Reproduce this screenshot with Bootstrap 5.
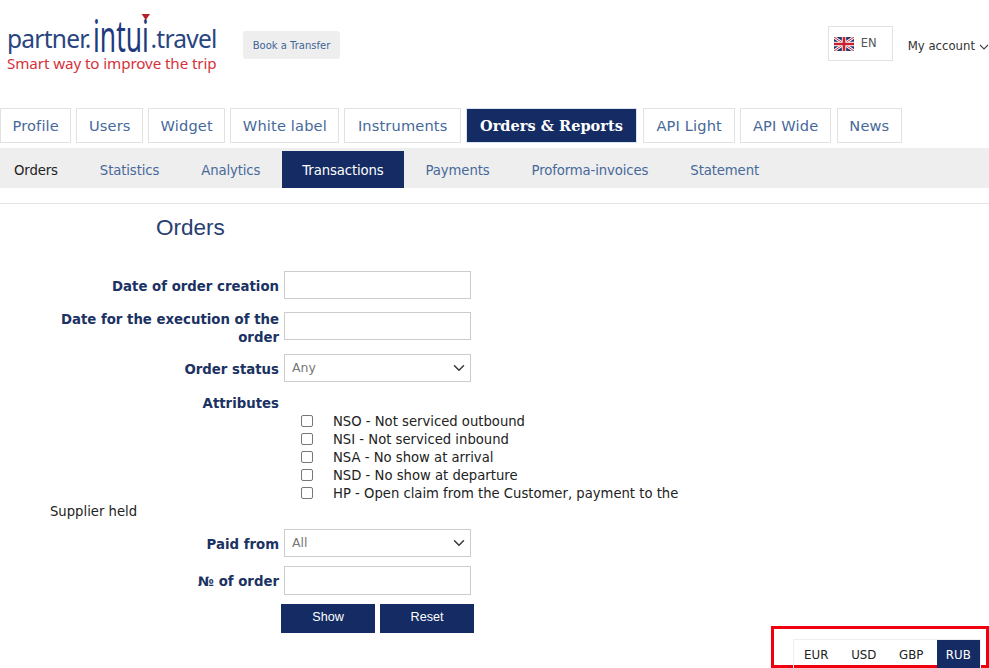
<!DOCTYPE html>
<html lang="en">
<head>
    <meta charset="UTF-8">
    <meta name="viewport" content="width=device-width, initial-scale=1.0">
    <title>Orders</title>
    <link href="https://cdn.jsdelivr.net/npm/bootstrap@5.3.0/dist/css/bootstrap.min.css" rel="stylesheet">
    <style>
        html, body {
            height: 668px;
            overflow: hidden;
        }
        body {
            font-family: "DejaVu Sans", Verdana, sans-serif;
            font-size: 13px;
            color: #222;
            background: #fff;
        }
        .top-head {
            height: 108px;
            padding: 13px 0 0 7px;
        }
        .logo-box {
            width: 210px;
            height: 62px;
            font-family: "Noto Sans", sans-serif;
            line-height: 1;
        }
        .logo-line {
            display: flex;
            align-items: flex-end;
            height: 41px;
            color: #27457f;
            font-size: 24.5px;
            line-height: 30px;
            letter-spacing: -.75px;
            white-space: nowrap;
        }
        .logo-big {
            display: inline-block;
            position: relative;
            width: 57px;
            margin: 0 1px 0 2px;
            font-size: 44px;
            line-height: 38px;
            color: #1d3a7e;
            letter-spacing: 0;
            transform-origin: left bottom;
            transform: scaleX(.6);
        }
        .logo-tick {
            position: absolute;
            left: 81px;
            top: -2px;
            width: 0;
            height: 0;
            border-left: 7px solid transparent;
            border-right: 7px solid transparent;
            border-top: 6px solid #b3202c;
        }
        .logo-sub {
            color: #d5323c;
            font-size: 15.2px;
            white-space: nowrap;
            letter-spacing: -.1px;
            margin-top: 2px;
        }
        .book-btn {
            margin: 18px 0 0 26px;
            height: 28px;
            width: 97px;
            padding: 0;
            background: #eee;
            border: 0;
            border-radius: 3px;
            font-size: 10px;
            line-height: 29px;
            color: #3d6596;
        }
        .lang-box {
            width: 65px;
            height: 35px;
            border: 1px solid #e2e2e2;
            margin-top: 13px;
            padding-left: 5px;
            font-size: 11.5px;
            color: #555;
            gap: 7px;
        }
        .account-link {
            font-size: 11.7px;
            color: #333;
            margin: 25px 0 0 15px;
            text-decoration: none;
        }
        .main-tabs {
            gap: 5px;
            height: 35px;
        }
        .main-tabs .nav-link {
            height: 35px;
            padding: 0 11.5px;
            border: 1px solid #e2e2e2;
            border-radius: 0;
            color: #46699a;
            font-size: 14.6px;
            line-height: 33px;
            letter-spacing: .15px;
        }
        .main-tabs .nav-item:nth-child(5) .nav-link { padding: 0 12.5px; }
        .main-tabs .nav-item:nth-child(7) { margin-left: 1px; }
        .main-tabs .nav-item:nth-child(7) .nav-link { padding: 0 12.5px; }
        .main-tabs .nav-item:nth-child(9) { margin-left: 1px; }
        .main-tabs .nav-link.active {
            padding: 0 13px;
            background: #142c63;
            border-color: #d9e3f0;
            color: #fff;
            font-weight: 700;
            font-family: "DejaVu Serif", serif;
            font-size: 14.5px;
            letter-spacing: .05px;
        }
        .sub-tabs {
            margin-top: 5px;
            height: 40px;
            padding-top: 3px;
            background: #eee;
        }
        .sub-tabs .nav-link {
            height: 37px;
            margin: 0 1px;
            padding: 0 20px;
            color: #46699a;
            font-size: 13.25px;
            line-height: 40px;
            letter-spacing: -.12px;
            border-radius: 0;
        }
        .sub-tabs .nav-link.plain { color: #222; padding-left: 13px; }
        .sub-tabs .nav-link.active { background: #142c63; color: #fff; }
        .page-rule {
            margin: 15px 0 0;
            border-top: 1px solid #e4e4e4;
            opacity: 1;
        }
        .page-title {
            margin: 10px 0 0 156px;
            font-family: "Liberation Sans", Arial, sans-serif;
            font-size: 22.5px;
            line-height: 27px;
            color: #27406f;
        }
        .order-form { margin-top: 30px; }
        .form-line {
            display: flex;
            gap: 5px;
            height: 28px;
            margin-bottom: 13px;
        }
        .form-line.line-gap { margin-bottom: 14px; }
        .form-label-cell {
            width: 279px;
            flex: none;
            padding: 7px 0 0 50px;
            text-align: right;
            font-weight: 700;
            font-size: 13.3px;
            line-height: 18px;
            color: #1b3263;
        }
        .form-label-cell.two-lines { padding-top: 0; margin-top: -1px; }
        .form-control.field-box, .form-select.field-box {
            width: 187px;
            height: 28px;
            min-height: 0;
            padding: 0 7px;
            border: 1px solid #ccc;
            border-radius: 0;
            font-size: 12.5px;
            color: #777;
            background-position: right 3px center;
        }
        .attr-line { height: 18px; margin: 0; }
        .attr-line .form-label-cell { padding-top: 0; }
        .attr-text {
            width: 700px;
            padding-left: 50px;
            font-size: 13.2px;
            line-height: 18px;
            color: #222;
        }
        .attr-text .form-check-input {
            width: 12px;
            height: 12px;
            margin: 0 20px 0 251px;
            border: 1px solid #777;
            border-radius: 2px;
            vertical-align: -1px;
            float: none;
        }
        .line-paid { margin: 8px 0 9px; }
        .line-number { height: 29px; margin-bottom: 0; }
        .line-number .field-box.form-control { height: 29px; }
        .action-row {
            display: flex;
            gap: 5px;
            padding-left: 281px;
            margin-top: 9px;
        }
        .action-btn {
            width: 94px;
            height: 29px;
            padding: 0 0 2px;
            border: 0;
            border-radius: 0;
            background: #142c63;
            color: #fff;
            font-family: "Liberation Sans", Arial, sans-serif;
            font-size: 12.6px;
        }
        .currency-mark {
            position: absolute;
            left: 771px;
            top: 626px;
            width: 218px;
            height: 42px;
            border: 3px solid #f0000f;
            padding: 10px 0 0 19px;
        }
        .currency-list {
            width: 188px;
            height: 29px;
            border: 1px solid #eee;
            border-bottom: 0;
            font-size: 11.8px;
            color: #222;
        }
        .currency-list span {
            width: 47.6px;
            padding-right: 3px;
            line-height: 30px;
            text-align: center;
        }
        .currency-list span.current {
            background: #142c63;
            color: #fff;
            width: 43.5px;
            padding-right: 0;
        }
    </style>
</head>
<body>
    <div class="top-head d-flex">
        <div class="logo-box">
            <div class="logo-line"><span>partner.</span><span class="logo-big">intui<i class="logo-tick"></i></span><span>.travel</span></div>
            <div class="logo-sub">Smart way to improve the trip</div>
        </div>
        <button type="button" class="btn book-btn">Book a Transfer</button>
        <div class="d-flex align-items-start ms-auto">
            <div class="lang-box d-flex align-items-center">
                <svg width="20" height="14" viewBox="0 0 60 42">
                    <rect width="60" height="42" fill="#27366f"/>
                    <path d="M0 0L60 42M60 0L0 42" stroke="#fff" stroke-width="8"/>
                    <path d="M0 0L60 42M60 0L0 42" stroke="#c8202f" stroke-width="3"/>
                    <path d="M30 0V42M0 21H60" stroke="#fff" stroke-width="13"/>
                    <path d="M30 0V42M0 21H60" stroke="#c8202f" stroke-width="8"/>
                </svg>
                <span>EN</span>
            </div>
            <a href="#" class="account-link d-flex align-items-center gap-1">My account
                <svg width="10" height="6" viewBox="0 0 10 6"><path d="M1 1l4 4 4-4" fill="none" stroke="#444" stroke-width="1.1"/></svg>
            </a>
        </div>
    </div>

    <ul class="nav main-tabs">
        <li class="nav-item"><a class="nav-link" href="#">Profile</a></li>
        <li class="nav-item"><a class="nav-link" href="#">Users</a></li>
        <li class="nav-item"><a class="nav-link" href="#">Widget</a></li>
        <li class="nav-item"><a class="nav-link" href="#">White label</a></li>
        <li class="nav-item"><a class="nav-link" href="#">Instruments</a></li>
        <li class="nav-item"><a class="nav-link active" href="#">Orders &amp; Reports</a></li>
        <li class="nav-item"><a class="nav-link" href="#">API Light</a></li>
        <li class="nav-item"><a class="nav-link" href="#">API Wide</a></li>
        <li class="nav-item"><a class="nav-link" href="#">News</a></li>
    </ul>

    <ul class="nav sub-tabs">
        <li class="nav-item"><a class="nav-link plain" href="#">Orders</a></li>
        <li class="nav-item"><a class="nav-link" href="#">Statistics</a></li>
        <li class="nav-item"><a class="nav-link" href="#">Analytics</a></li>
        <li class="nav-item"><a class="nav-link active" href="#">Transactions</a></li>
        <li class="nav-item"><a class="nav-link" href="#">Payments</a></li>
        <li class="nav-item"><a class="nav-link" href="#">Proforma-invoices</a></li>
        <li class="nav-item"><a class="nav-link" href="#">Statement</a></li>
    </ul>

    <hr class="page-rule">
    <h1 class="page-title">Orders</h1>

    <form class="order-form">
        <div class="form-line">
            <label class="form-label-cell">Date of order creation</label>
            <input type="text" class="form-control field-box">
        </div>
        <div class="form-line line-gap">
            <label class="form-label-cell two-lines">Date for the execution of the order</label>
            <input type="text" class="form-control field-box">
        </div>
        <div class="form-line">
            <label class="form-label-cell">Order status</label>
            <select class="form-select field-box"><option>Any</option></select>
        </div>
        <div class="form-line attr-line">
            <label class="form-label-cell">Attributes</label>
        </div>
        <div class="attr-text">
            <input class="form-check-input" type="checkbox">NSO - Not serviced outbound<br>
            <input class="form-check-input" type="checkbox">NSI - Not serviced inbound<br>
            <input class="form-check-input" type="checkbox">NSA - No show at arrival<br>
            <input class="form-check-input" type="checkbox">NSD - No show at departure<br>
            <input class="form-check-input" type="checkbox">HP - Open claim from the Customer, payment to the Supplier held
        </div>
        <div class="form-line line-paid">
            <label class="form-label-cell">Paid from</label>
            <select class="form-select field-box"><option>All</option></select>
        </div>
        <div class="form-line line-number">
            <label class="form-label-cell">№ of order</label>
            <input type="text" class="form-control field-box">
        </div>
        <div class="action-row">
            <button type="button" class="btn action-btn">Show</button>
            <button type="button" class="btn action-btn">Reset</button>
        </div>
    </form>

    <div class="currency-mark">
        <div class="currency-list d-flex">
            <span>EUR</span><span>USD</span><span>GBP</span><span class="current">RUB</span>
        </div>
    </div>

    <script src="https://cdn.jsdelivr.net/npm/bootstrap@5.3.0/dist/js/bootstrap.bundle.min.js"></script>
</body>
</html>
